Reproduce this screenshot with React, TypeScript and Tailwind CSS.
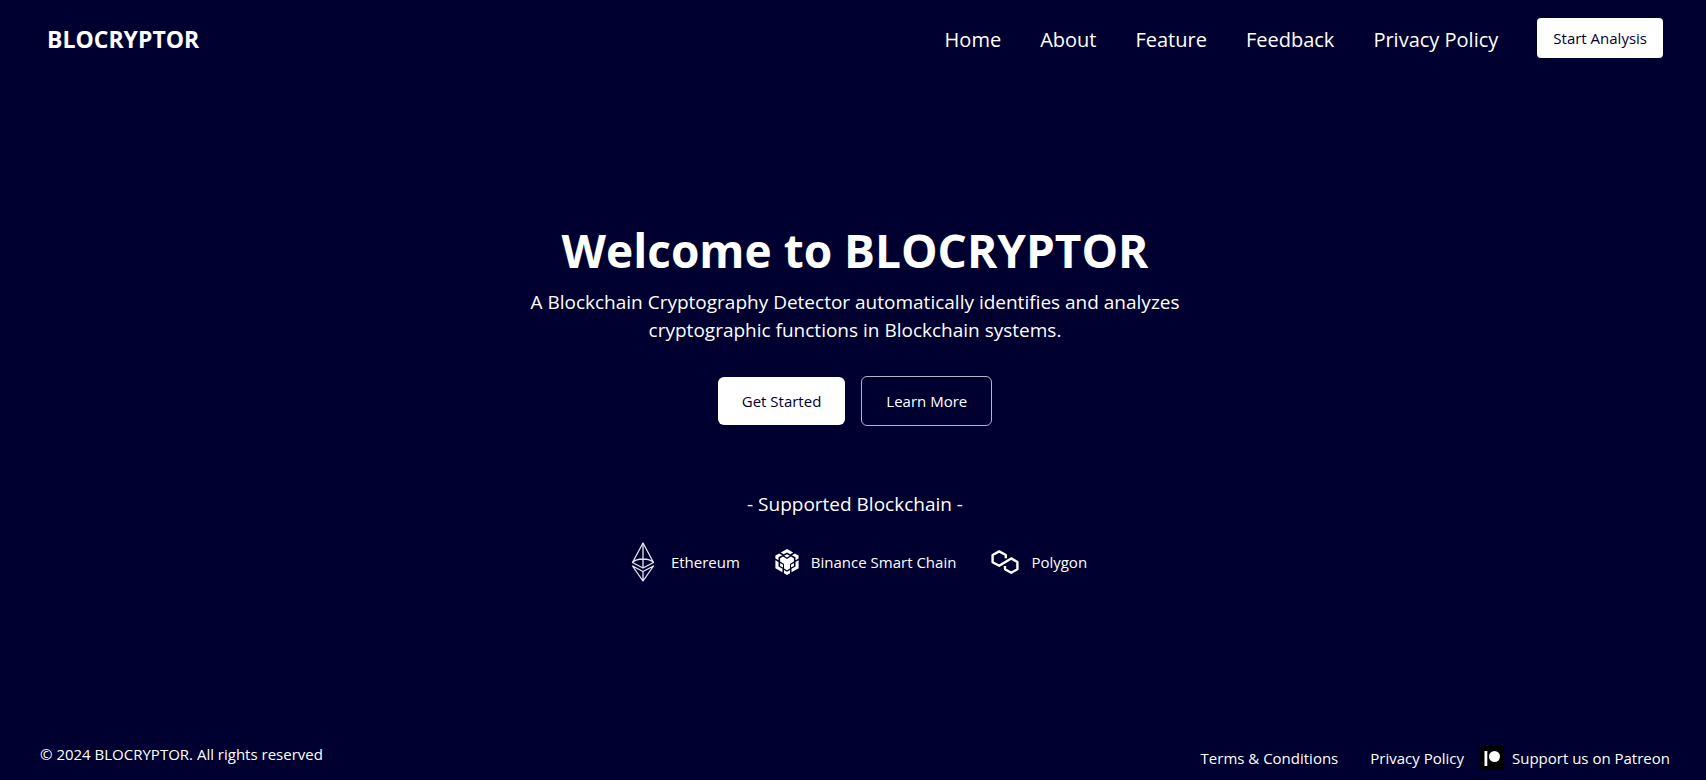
const navLinks = ['Home', 'About', 'Feature', 'Feedback', 'Privacy Policy'];

function EthereumIcon() {
    return (
        <svg viewBox="0 0 24 40" className="h-10 w-6" fill="none" stroke="#e6e6f5" strokeWidth="1.3" strokeLinejoin="round" aria-hidden="true">
            <path d="M12 1 1.5 20.5 12 26 22.5 20.5Z" />
            <path d="M12 1V26M1.5 20.5C6 15.8 18 15.8 22.5 20.5" />
            <path d="M1.5 24 12 29.5 22.5 24 12 39ZM12 29.5V39" />
        </svg>
    );
}

function BinanceIcon() {
    return (
        <svg viewBox="0 0 24 26" className="h-[26px] w-6" fill="white" aria-hidden="true">
            <path d="M12 0 18.2 3.5 15.2 5.2 12 3.4 8.8 5.2 5.8 3.5Z" />
            <path d="M4.2 4.4 7.2 6.2 3.5 8.3V11.2L.4 9.4V6.6Z" />
            <path d="M19.8 4.4 16.8 6.2 20.5 8.3V11.2L23.6 9.4V6.6Z" />
            <path d="M.4 11.2 3.5 13V17.4L7.5 19.8V23.3L.4 19.2Z" />
            <path d="M23.6 11.2 20.5 13V17.4L16.5 19.8V23.3L23.6 19.2Z" />
            <path d="M12 5.2 14.8 6.8 12 8.5 9.2 6.8Z" />
            <path d="M5.1 9.3 8 7.6 12 10 16 7.6 18.9 9.3V12.5L15 14.9V19.5L12 21.2 9 19.5V14.9L5.1 12.5Z" />
            <path d="M5.1 14 8 15.7V18.6L5.1 16.9Z" />
            <path d="M18.9 14 16 15.7V18.6L18.9 16.9Z" />
            <path d="M9 21 12 22.7 15 21V24.3L12 26 9 24.3Z" />
        </svg>
    );
}

function PolygonIcon() {
    return (
        <svg viewBox="0 0 28 24" className="h-6 w-7" fill="none" stroke="white" strokeWidth="2.4" strokeLinejoin="round" aria-hidden="true">
            <path d="M14.8 8.2V5L8.2 1.4 1.6 5V12.2L8.2 15.8 20.2 8.4 26.4 12V19.2L20.2 22.7 14 19.2V16" />
        </svg>
    );
}

function PatreonIcon() {
    return (
        <svg viewBox="0 0 24 24" className="size-6" aria-hidden="true">
            <rect width="24" height="24" rx="1" fill="black" />
            <rect x="4.5" y="5" width="2.8" height="15" fill="white" />
            <circle cx="14.5" cy="10.5" r="5.5" fill="white" />
        </svg>
    );
}

const chains = [
    { name: 'Ethereum', icon: EthereumIcon, gap: 'gap-4' },
    { name: 'Binance Smart Chain', icon: BinanceIcon, gap: 'gap-3' },
    { name: 'Polygon', icon: PolygonIcon, gap: 'gap-3' },
];

export default function App() {
    return (
        <div className="flex min-h-screen flex-col bg-[#000030] font-['Open_Sans',sans-serif] text-[15px] text-white">
            {/* Header */}
            <header className="flex items-center justify-between py-[18px] pr-[43px] pl-[47px]">
                <a href="#home" className="pt-0.5 text-[23px] leading-8 font-bold">BLOCRYPTOR</a>
                <nav className="flex items-center gap-[39px] text-xl">
                    {navLinks.map((label) => (
                        <a key={label} href={`#${label.toLowerCase().replace(' ', '-')}`} className="pt-1 hover:text-gray-300">
                            {label}
                        </a>
                    ))}
                    <button type="button" className="h-10 rounded bg-white px-4 text-[15px] text-[#000030]">
                        Start Analysis
                    </button>
                </nav>
            </header>

            {/* Hero */}
            <main className="flex grow flex-col items-center justify-center pb-3 pl-1 text-center">
                <h1 className="text-[46px] leading-[52px] font-bold">Welcome to BLOCRYPTOR</h1>
                <p className="mt-3 max-w-2xl text-[19px] leading-7">
                    A Blockchain Cryptography Detector automatically identifies and analyzes cryptographic functions in Blockchain systems.
                </p>
                <div className="mt-8 flex items-center gap-4">
                    <button type="button" className="h-12 rounded-md bg-white px-6 text-[#000030]">Get Started</button>
                    <button type="button" className="h-[50px] rounded-md border border-white/70 px-6">Learn More</button>
                </div>
                <h2 className="mt-16 text-[19px] leading-7">- Supported Blockchain -</h2>
                <ul className="mt-6 flex items-center gap-[35px] pl-2">
                    {chains.map((chain) => (
                        <li key={chain.name} className={`flex items-center ${chain.gap}`}>
                            <chain.icon />
                            <span>{chain.name}</span>
                        </li>
                    ))}
                </ul>
            </main>

            {/* Footer */}
            <footer className="flex items-start justify-between pr-9 pb-2.5 pl-10 leading-6">
                <p>© 2024 BLOCRYPTOR. All rights reserved</p>
                <div className="flex items-center pt-1">
                    <a href="#terms" className="mr-8">Terms &amp; Conditions</a>
                    <a href="#privacy" className="mr-4">Privacy Policy</a>
                    <a href="#patreon" className="flex items-center gap-2">
                        <PatreonIcon />
                        Support us on Patreon
                    </a>
                </div>
            </footer>
        </div>
    );
}
